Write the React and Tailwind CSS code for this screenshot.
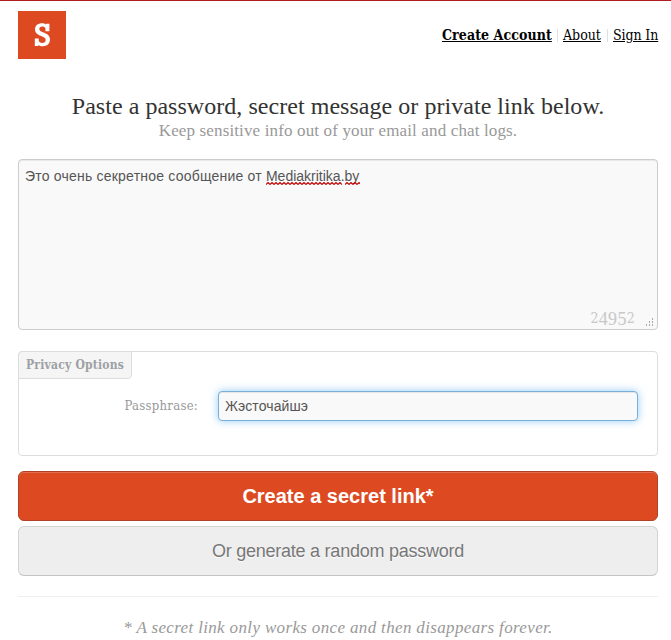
function Logo() {
  return (
    <div className="flex h-12 w-12 items-center justify-center bg-[#dd4a22]">
      <svg width="17" height="24" viewBox="0.500 0 15 24" preserveAspectRatio="none" fill="#fff">
        <path d="M7.600.3c1.500 0 2.500.4 3.300 1.100V.7h3.200v7.600h-3.500V5.500C10 4.100 9.200 3.500 7.900 3.500 6.200 3.500 5.200 4.400 5.200 5.900c0 1.700 1.100 2.400 3.800 3.700 3.700 1.700 5.600 3.400 5.600 7 0 4.100-2.600 6.700-6.300 6.700-1.800 0-3-.5-4-1.400v1H1.200v-7.500h3.500v2.700c.6 1.300 1.600 2 3.100 2 1.800 0 3-1.100 3-3 0-1.900-1.200-2.700-3.900-4C3.100 11.400 1.400 9.700 1.400 6.300 1.400 2.600 4 .3 7.600.3z" />
      </svg>
    </div>
  );
}

const serif = "font-['DejaVu_Serif_Condensed','DejaVu_Serif',serif] [font-stretch:condensed]";
const times = "font-['Liberation_Serif',serif]";
const sans = "font-['Liberation_Sans',sans-serif]";

function Wavy({ width }) {
  const d = Array.from({ length: Math.ceil(width / 4) }, (_, i) => `M${i * 4} 2.500l2-2 2 2`).join('');
  return (
    <svg className="absolute top-[15px] left-0" width={width} height="3" fill="none" stroke="#c00c0c" strokeWidth="1.2">
      <path d={d} />
    </svg>
  );
}

export default function App() {
  return (
    <div className={`h-[640px] w-[671px] overflow-hidden border-t border-[#b01c20] bg-white pr-[13px] pl-[18px] ${serif}`}>
      <header className="flex justify-between pt-[10px]">
        <Logo />
        <nav className="flex h-12 items-center whitespace-nowrap text-[14px] text-black">
          <a className="w-[110px] font-bold tracking-[0.08px] underline">Create Account</a>
          <span className="mx-[5px] h-[13px] w-px bg-[#dde1e4]" />
          <a className="w-[39px] underline">About</a>
          <span className="mx-[5px] h-[13px] w-px bg-[#dde1e4]" />
          <a className="w-[45px] tracking-[-0.1px] underline">Sign In</a>
        </nav>
      </header>

      <h1 className={`mt-[33px] h-[29px] text-center text-[24px] leading-[28px] tracking-[0.04px] whitespace-nowrap text-[#333] ${times}`}>
        Paste a password, secret message or private link below.
      </h1>
      <h2 className={`h-[20px] text-center text-[17px] leading-[20px] tracking-[0.14px] whitespace-nowrap text-[#999] ${times}`}>
        Keep sensitive info out of your email and chat logs.
      </h2>

      <div className="relative mt-[18px] h-[171px] rounded-[4px] border border-[#ccc] bg-[#f9f9f9] px-[6px] pt-[7px] shadow-[inset_0_1px_1px_rgba(0,0,0,0.07)]">
        <p className={`text-[14px] leading-[18px] whitespace-nowrap text-[#555] ${sans}`}>
          <span className="tracking-[0.21px]">Это очень секретное сообщение от </span>
          <span className="relative inline-block">Mediakritika<Wavy width={76} /></span>.
          <span className="relative inline-block">by<Wavy width={15} /></span>
        </p>
        <div className={`absolute right-[22px] bottom-[2px] flex items-baseline text-[18px] leading-5 tracking-[0.3px] text-[#c8c8c8] ${times}`}>
          <span className={`translate-y-px text-[14px] ${serif}`}>2</span>
          <span className="translate-y-[3px]">495</span>
          <span className={`translate-y-px text-[14px] ${serif}`}>2</span>
        </div>
        <svg className="absolute right-[3px] bottom-[2px]" width="9" height="9" fill="#aaa">
          <path d="M7 0h1v2H7zM7 3h1v2H7zM4 3h1v2H4zM7 6h1v2H7zM4 6h1v2H4zM1 6h1v2H1z" />
        </svg>
      </div>

      <section className="mt-[21px] h-[105px] rounded-[4px] border border-[#ddd]">
        <h3 className="-mt-px -ml-px h-[28px] w-[114px] rounded-tl-[4px] rounded-br-[4px] border border-[#ddd] bg-[#f5f5f5] pl-[7px] text-[12px] leading-[26px] font-bold tracking-[0.2px] whitespace-nowrap text-[#9da0a4]">
          Privacy Options
        </h3>
        <div className="mt-[12px] flex items-center">
          <label className="w-[199px] pr-[20px] text-right text-[13px] tracking-[0.25px] text-[#999]">Passphrase:</label>
          <div className={`h-[30px] w-[420px] rounded-[4px] border border-[#77b0dc] bg-[#f9f9f9] px-[6px] text-[14px] leading-[29px] tracking-[0.1px] text-[#555] shadow-[inset_0_1px_1px_rgba(0,0,0,0.075),0_0_8px_rgba(82,168,236,0.6)] ${sans}`}>
            Жэсточайшэ
          </div>
        </div>
      </section>

      <button className={`mt-[15px] block h-[50px] w-full rounded-[6px] border border-[#b04126] bg-[#dd4a22] text-[20px] font-bold text-white shadow-[inset_0_1px_0_rgba(255,255,255,0.2)] ${sans}`}>
        Create a secret link*
      </button>
      <button className={`mt-[5px] block h-[50px] w-full rounded-[6px] border border-[#d4d4d4] border-b-[#c4c4c4] bg-[#eee] text-[18px] tracking-[-0.24px] text-[#777] [text-shadow:0_1px_1px_#fff] ${sans}`}>
        Or generate a random password
      </button>

      <hr className="mt-[20px] border-t border-[#eee]" />
      <p className={`mt-[20px] text-center text-[17px] leading-[22px] tracking-[0.35px] whitespace-nowrap text-[#999] italic ${times}`}>
        * A secret link only works once and then disappears forever.
      </p>
    </div>
  );
}
